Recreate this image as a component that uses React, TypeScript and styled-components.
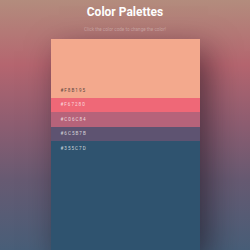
import styled, { createGlobalStyle } from "styled-components";
import { FC } from "react";

interface Swatch {
  code: string;
  bg: string;
  ink: string;
}

const swatches: Swatch[] = [
  { code: "#F8B195", bg: "#f3a98d", ink: "#5b4841" },
  { code: "#F67280", bg: "#ef6877", ink: "rgba(255,255,255,0.75)" },
  { code: "#C06C84", bg: "#b6637a", ink: "rgba(255,255,255,0.75)" },
  { code: "#6C5B7B", bg: "#5e5371", ink: "rgba(255,255,255,0.75)" },
  { code: "#355C7D", bg: "#2f536f", ink: "rgba(255,255,255,0.75)" },
];

const App: FC = () => (
  <Page>
    <GlobalStyle />
    <Title>Color Palettes</Title>
    <Hint>Click the color code to change the color!</Hint>

    <Card>
      {swatches.map((s, i) => (
        <Row key={s.code} $bg={s.bg} $first={i === 0} $last={i === swatches.length - 1}>
          <Code $ink={s.ink}>{s.code}</Code>
        </Row>
      ))}
    </Card>
  </Page>
);

export default App;

// styled components

const GlobalStyle = createGlobalStyle`
  html, body {
    margin: 0;
    padding: 0;
    overflow: hidden;
  }
`;

const Page = styled.div`
  width: 250px;
  height: 250px;
  overflow: hidden;
  display: flex;
  flex-direction: column;
  align-items: center;
  font-family: Roboto, "Liberation Sans", sans-serif;
  background: linear-gradient(
    #b38c7d 0%,
    #b5656f 26%,
    #8d5d71 50%,
    #675a72 72%,
    #485e78 100%
  );
`;

const Title = styled.h1`
  margin: 5px 0 0;
  font-size: 12px;
  line-height: 15px;
  font-weight: 700;
  color: #ffffff;
`;

const Hint = styled.p`
  margin: 7px 0 0;
  font-size: 4.6px;
  line-height: 6px;
  color: rgba(255, 255, 255, 0.35);
`;

const Card = styled.div`
  margin-top: 6px;
  width: 149px;
  flex: 1;
  display: flex;
  flex-direction: column;
  box-shadow: 8px 12px 30px rgba(20, 10, 20, 0.55);
`;

const Row = styled.div<{ $bg: string; $first: boolean; $last: boolean }>`
  background: ${(p) => p.$bg};
  height: ${(p) => (p.$first ? "59px" : "14.3px")};
  flex: ${(p) => (p.$last ? 1 : "none")};
  display: flex;
  align-items: ${(p) => (p.$last ? "flex-start" : "flex-end")};
  padding: ${(p) => (p.$first ? "0 0 5px 10px" : p.$last ? "5px 0 0 10px" : "0 0 5px 10px")};
  box-sizing: border-box;
`;

const Code = styled.span<{ $ink: string }>`
  font-family: Roboto, "Liberation Sans", sans-serif;
  font-size: 4.6px;
  line-height: 5px;
  letter-spacing: 1px;
  color: ${(p) => p.$ink};
`;
